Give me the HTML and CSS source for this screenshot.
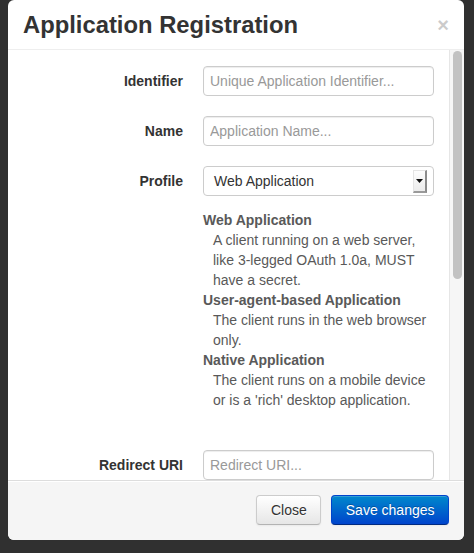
FILE: index.html
```html
<!DOCTYPE html>
<html lang="en">
<head>
<meta charset="utf-8">
<title>Application Registration</title>
<link rel="stylesheet" href="styles.css">
</head>
<body>
<div class="modal">
  <div class="modal-header">
    <span class="close">×</span>
    <h3>Application Registration</h3>
  </div>
  <div class="modal-body">
    <div class="body-content">
      <form class="form-horizontal">
        <div class="control-group">
          <label class="control-label">Identifier</label>
          <div class="controls"><input class="input" type="text" placeholder="Unique Application Identifier..."></div>
        </div>
        <div class="control-group">
          <label class="control-label">Name</label>
          <div class="controls"><input class="input" type="text" placeholder="Application Name..."></div>
        </div>
        <div class="control-group">
          <label class="control-label">Profile</label>
          <div class="controls">
            <div class="select">
              <span class="select-text">Web Application</span>
              <span class="select-arrow"><svg width="7" height="4" viewBox="0 0 7 4"><polygon points="0,0 7,0 3.5,4" fill="#111"/></svg></span>
            </div>
            <dl class="help-block">
              <dt>Web Application</dt>
              <dd>A client running on a web server, like 3-legged OAuth 1.0a, MUST have a secret.</dd>
              <dt>User-agent-based Application</dt>
              <dd>The client runs in the web browser only.</dd>
              <dt>Native Application</dt>
              <dd>The client runs on a mobile device or is a 'rich' desktop application.</dd>
            </dl>
          </div>
        </div>
        <div class="control-group">
          <label class="control-label">Redirect URI</label>
          <div class="controls"><input class="input" type="text" placeholder="Redirect URI..."></div>
        </div>
      </form>
    </div>
    <div class="scrollbar"><div class="thumb"></div></div>
  </div>
  <div class="modal-footer">
    <button class="btn" type="button">Close</button>
    <button class="btn btn-primary" type="button">Save changes</button>
  </div>
</div>
</body>
</html>
```
FILE: styles.css
```css
* { box-sizing: border-box; }
html, body { margin: 0; padding: 0; }
body {
  background: #303030;
  font-family: "Liberation Sans", Arial, Helvetica, sans-serif;
  font-size: 14px;
  line-height: 20px;
  color: #333;
  padding-left: 8px;
  height: 553px;
  overflow: hidden;
}
.modal {
  width: 456px;
  background: #fff;
  border-radius: 6px;
  overflow: hidden;
}
.modal-header {
  padding: 10px 15px 9px;
  border-bottom: 1px solid #eee;
}
.modal-header h3 {
  margin: 0;
  font-size: 23.8px;
  line-height: 30px;
  font-weight: bold;
  color: #333;
}
.close {
  float: right;
  font-size: 20px;
  font-weight: bold;
  line-height: 20px;
  margin-top: 5px;
  color: #000;
  opacity: 0.2;
}
.modal-body {
  display: flex;
  height: 430px;
}
.body-content {
  flex: 1;
  padding: 16px 15px 0;
  overflow: hidden;
}
.form-horizontal { margin: 0; }
.control-group {
  display: flex;
  margin-bottom: 20px;
}
.control-label {
  width: 160px;
  flex: none;
  text-align: right;
  padding-top: 5px;
  font-weight: bold;
  color: #333;
}
.controls {
  flex: 1;
  margin-left: 20px;
}
.input {
  display: block;
  width: 100%;
  height: 30px;
  padding: 4px 6px;
  margin: 0;
  font-family: inherit;
  font-size: 14px;
  line-height: 20px;
  color: #555;
  background: #fff;
  border: 1px solid #ccc;
  border-radius: 4px;
  box-shadow: inset 0 1px 1px rgba(0,0,0,0.075);
  outline: none;
}
.input::placeholder { color: #999; }
.select {
  display: flex;
  align-items: center;
  justify-content: space-between;
  height: 30px;
  padding: 0 6px 0 10px;
  border: 1px solid #ccc;
  border-radius: 4px;
  background: #fff;
}
.select-text { color: #333; }
.select-arrow {
  display: flex;
  align-items: center;
  justify-content: center;
  width: 14px;
  height: 23px;
  background: linear-gradient(#fdfdfd, #ececec);
  border: 1px solid #e4e4e4;
  border-right: 2px solid #8c8c8c;
  border-bottom: 2px solid #9a9a9a;
}
.help-block {
  margin: 14px 0 20px;
  color: #595959;
}
.help-block dt { font-weight: bold; }
.help-block dd { margin: 0 0 0 10px; }
.scrollbar {
  width: 15px;
  flex: none;
  background: #f6f6f6;
  border-left: 1px solid #e6e6e6;
  padding: 1px 2px 0 3px;
}
.thumb {
  height: 228px;
  background: #c2c2c2;
  border-radius: 5px;
}
.modal-footer {
  display: flex;
  justify-content: flex-end;
  gap: 10px;
  padding: 14px 15px 15px;
  background: #f5f5f5;
  border-top: 1px solid #ddd;
  box-shadow: inset 0 1px 0 #fff;
}
.btn {
  height: 30px;
  padding: 4px 13.5px;
  font-family: inherit;
  font-size: 14px;
  line-height: 20px;
  color: #333;
  text-shadow: 0 1px 1px rgba(255,255,255,0.75);
  background: linear-gradient(#ffffff, #e6e6e6);
  border: 1px solid #cccccc;
  border-bottom-color: #b3b3b3;
  border-radius: 4px;
  box-shadow: inset 0 1px 0 rgba(255,255,255,0.2), 0 1px 2px rgba(0,0,0,0.05);
}
.btn-primary {
  color: #fff;
  text-shadow: 0 -1px 0 rgba(0,0,0,0.25);
  background: linear-gradient(#0088cc, #0044cc);
  border-color: #0044cc #0044cc #002a80;
}
```
